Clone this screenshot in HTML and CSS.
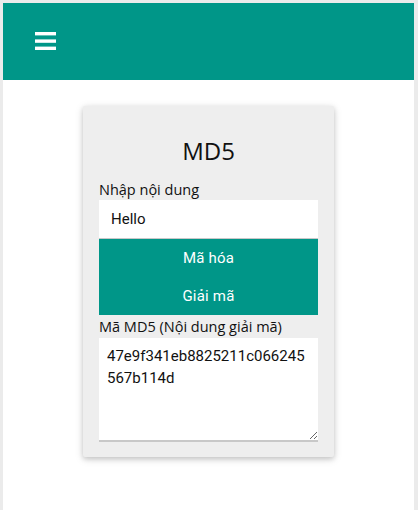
FILE: index.html
```html
<!DOCTYPE html>
<html lang="vi">
<head>
<meta charset="utf-8">
<title>MD5</title>
<link rel="stylesheet" href="styles.css">
</head>
<body>
<div class="page">
  <header class="topbar">
    <button class="menu-btn" aria-label="Menu">
      <svg width="22" height="19" viewBox="0 0 22 19">
        <rect x="0" y="0" width="21" height="3.4" fill="#fff"/>
        <rect x="0" y="7.4" width="21" height="3.4" fill="#fff"/>
        <rect x="0" y="14.6" width="21" height="3.4" fill="#fff"/>
      </svg>
    </button>
  </header>
  <main class="content">
    <section class="card">
      <h1 class="card-title">MD5</h1>
      <label class="field-label" for="src">Nhập nội dung</label>
      <input id="src" class="text-input" type="text" value="Hello">
      <button class="action-btn">Mã hóa</button>
      <button class="action-btn">Giải mã</button>
      <label class="field-label" for="out">Mã MD5 (Nội dung giải mã)</label>
      <textarea id="out" class="text-area">47e9f341eb8825211c066245567b114d</textarea>
    </section>
  </main>
</div>
</body>
</html>
```

FILE: styles.css
```css
html, body {
  margin: 0;
  padding: 0;
}
body {
  background: #ebebeb;
  padding: 3px 4px 0 3px;
  font-family: "Open Sans", "Noto Sans", sans-serif;
  color: #111;
}
.page {
  background: #fff;
  min-height: 520px;
}
.topbar {
  background: #009688;
  height: 77px;
  display: flex;
  align-items: center;
  padding-left: 32px;
}
.menu-btn {
  background: none;
  border: 0;
  padding: 0;
  margin-top: -1px;
  display: flex;
  cursor: pointer;
}
.content {
  display: flex;
  justify-content: center;
  padding-top: 26px;
}
.card {
  width: 219px;
  background: #eeeeee;
  border-radius: 2px;
  box-shadow: 0 2px 5px rgba(0,0,0,0.16), 0 2px 10px rgba(0,0,0,0.12);
  padding: 29px 16px 15px;
  display: flex;
  flex-direction: column;
}
.card-title {
  margin: 0 0 13px;
  text-align: center;
  font-weight: 400;
  font-size: 24px;
  line-height: 32px;
  color: #111;
}
.field-label {
  font-size: 14.5px;
  line-height: 19px;
  height: 19px;
  color: #111;
}
.text-input {
  box-sizing: border-box;
  height: 39px;
  width: 100%;
  border: 0;
  border-bottom: 1px solid #c8c8c8;
  background: #fff;
  padding: 0 12px;
  font-family: Roboto, sans-serif;
  font-size: 15px;
  color: #111;
  margin: 1px 0 0;
  outline: none;
}
.action-btn {
  height: 38px;
  border: 0;
  background: #009688;
  color: #fff;
  font-family: Roboto, sans-serif;
  font-size: 15px;
  font-weight: 400;
  letter-spacing: 0.2px;
  padding: 0;
  margin: 0;
}
.action-btn + .field-label {
  margin-top: 2px;
}
.text-area {
  box-sizing: border-box;
  width: 100%;
  height: 104px;
  margin: 2px 0 0;
  border: 0;
  border-bottom: 2px solid #c8c8c8;
  background: #fff;
  padding: 7px 8px;
  font-family: Roboto, sans-serif;
  font-size: 15px;
  line-height: 22px;
  color: #111;
  outline: none;
  word-break: break-all;
}
```
